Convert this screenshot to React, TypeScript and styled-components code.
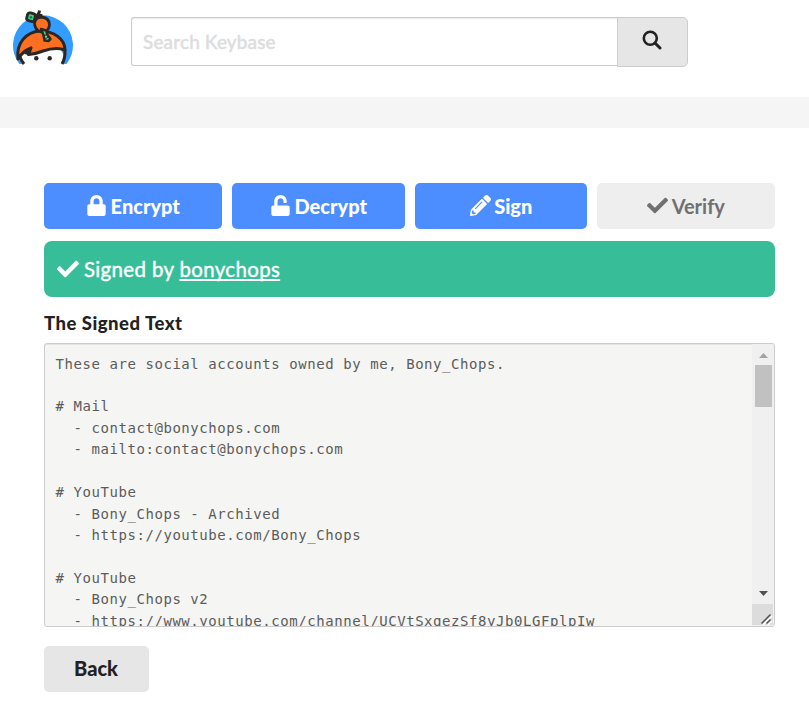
import React from "react";
import styled, { createGlobalStyle } from "styled-components";
import { FaCheck, FaLock, FaPencilAlt, FaUnlock } from "react-icons/fa";

const GlobalStyle = createGlobalStyle`
  * { box-sizing: border-box; }
  body {
    margin: 0;
    background: #fff;
    color: #222;
    font-family: Lato, "Open Sans", sans-serif;
  }
`;

const Header = styled.header`
  display: flex;
  height: 97px;
  padding: 9px 0 0 12px;
`;

const Logo = styled.svg`
  flex: none;
  width: 62px;
  height: 57px;
`;

const SearchForm = styled.form`
  display: flex;
  width: 557px;
  height: 50px;
  margin: 8px 0 0 57px;
`;

const SearchInput = styled.input`
  flex: 1;
  min-width: 0;
  height: 49px;
  padding: 0 11px 1px;
  border: 1px solid #ccc;
  border-right: 0;
  border-radius: 3px 0 0 3px;
  outline: 0;
  box-shadow: inset 0 1px 1px rgba(0, 0, 0, 0.075);
  font: 500 19px Lato, sans-serif;
  letter-spacing: 0.12px;
  &::placeholder { color: #ddd; opacity: 1; -webkit-text-stroke: 0.4px #ddd; }
`;

const SearchButton = styled.button`
  display: flex;
  align-items: center;
  justify-content: center;
  width: 71px;
  height: 50px;
  padding: 0 1px 4px 0;
  border: 1px solid #ccc;
  border-radius: 0 5px 5px 0;
  background: #e6e6e6;
  svg { width: 20px; height: 20px; }
`;

const Band = styled.div`
  height: 31px;
  background: #f5f5f5;
`;

const Main = styled.main`
  width: 731px;
  margin: 55px 0 0 44px;
`;

const Tabs = styled.nav`
  display: grid;
  grid-template-columns: 178px 173px 172px 178px;
  gap: 10px;
`;

const Tab = styled.button<{ $current?: boolean }>`
  display: flex;
  align-items: center;
  justify-content: center;
  gap: 4px;
  height: 46px;
  padding: 0;
  border: 0;
  border-radius: 5px;
  background: ${(p) => (p.$current ? "#eee" : "#4c8eff")};
  color: ${(p) => (p.$current ? "#707070" : "#fff")};
  font: 900 20px Lato, sans-serif;
  font-weight: ${(p) => (p.$current ? 700 : 900)};
  svg { width: auto; height: 21px; margin-top: -2px; }
  span { margin-left: -0.5px; }
`;

const Notice = styled.div`
  display: flex;
  align-items: center;
  gap: 5px;
  height: 56px;
  margin-top: 12px;
  padding: 0 13px;
  border-radius: 8px;
  background: #38bd99;
  color: #fff;
  font-size: 20.5px;
  letter-spacing: 0.33px;
  -webkit-text-stroke: 0.4px #fff;
  svg { width: 22px; height: 22px; }
  span { padding-bottom: 1px; }
  a { color: inherit; text-decoration: underline; text-decoration-thickness: 2px; text-underline-offset: 2px; text-decoration-skip-ink: none; }
`;

const Title = styled.h4`
  height: 20px;
  margin: 16px 0 10px;
  font-size: 18.5px;
  font-weight: 900;
  line-height: 20px;
  letter-spacing: 0.5px;
`;

const TextBox = styled.div`
  display: flex;
  height: 284px;
  border: 1px solid #ccc;
  border-radius: 3px;
  background: #f5f5f3;
  box-shadow: inset 0 1px 1px rgba(0, 0, 0, 0.075);
  overflow: hidden;
`;

const SignedText = styled.pre`
  flex: 1;
  min-width: 0;
  margin: 0;
  padding: 9.5px 0 0 10.5px;
  overflow: hidden;
  color: #5c5c5c;
  font: 14px/21.43px "DejaVu Sans Mono", monospace;
  letter-spacing: 0.562px;
`;

const Scrollbar = styled.div`
  display: flex;
  flex-direction: column;
  width: 22px;
  background: #f0f0f0;
`;

const Arrow = styled.svg`
  flex: none;
  width: 22px;
  height: 21px;
`;

const Track = styled.div`
  flex: 1;
  padding: 0 2px 0 3px;
`;

const Thumb = styled.div`
  height: 42px;
  background: #c1c1c1;
`;

const Grip = styled.svg`
  display: block;
  width: 21px;
  height: 21px;
  margin-bottom: 1px;
  background: #dcdcdc;
`;

const BackButton = styled.button`
  width: 105px;
  height: 46px;
  margin-top: 19px;
  padding: 0 1px 2px 0;
  border: 0;
  border-radius: 5px;
  background: #e6e6e6;
  color: #222;
  font: 900 20px Lato, sans-serif;
`;

const signedText = `These are social accounts owned by me, Bony_Chops.

# Mail
  - contact@bonychops.com
  - mailto:contact@bonychops.com

# YouTube
  - Bony_Chops - Archived
  - https://youtube.com/Bony_Chops

# YouTube
  - Bony_Chops v2
  - https://www.youtube.com/channel/UCVtSxqezSf8yJb0LGFplpIw`;

function KeybaseLogo() {
  return (
    <Logo viewBox="12 9 62 57" aria-label="Keybase">
      <path d="M19.5 64A30 30 0 1 1 66.5 64Z" fill="#339dff" />
      <path d="M22 64C19 53 25 45 43 45C60 45 66 52 63 64Z" fill="#fff" />
      <path d="M18 59C16 43 26 32 40 31C54 31 65 39 65 50C57 47 49 49 43 51C37 53.5 33 54 28.5 54.5L31 48C26 50 21 54 18 59Z" fill="#ff6f21" stroke="#2b2723" strokeWidth="3" strokeLinejoin="round" />
      <path d="M20 57Q21.5 61 24 64M65 50Q65.5 58 62 64" fill="none" stroke="#2b2723" strokeWidth="3" />
      <path d="M24 54L32 46L29 55Z" fill="#2b2723" />
      <path d="M34.5 23.5Q35 17 42 17Q49 18 49.500 24.500Q49 32 42 32Q35 31 34.500 23.500Z" fill="#ff6f21" stroke="#2b2723" strokeWidth="2.8" />
      <path d="M34 15.5Q39 16 39.5 10.5M36 17Q41 18 41 14" fill="none" stroke="#2b2723" strokeWidth="3" />
      <rect x="27" y="13.2" width="8" height="8" rx="2.5" fill="#3fce88" stroke="#2b2723" strokeWidth="2.8" transform="rotate(15 31 17.2)" />
      <circle cx="31" cy="17.2" r="1.3" fill="#1d7048" />
      <path d="M41 29L46 30.5L47.5 35L50.5 39L48.5 41L44.5 40.5L43.5 35Z" fill="#4be394" stroke="#2b2723" strokeWidth="2.5" strokeLinejoin="round" />
      <path d="M43.5 36L46.5 34.5M45 39L48.5 37" stroke="#2b2723" strokeWidth="1" />
      <circle cx="36.3" cy="58.3" r="2.2" fill="#2b2723" />
      <circle cx="49.7" cy="58.3" r="2.2" fill="#2b2723" />
    </Logo>
  );
}

export default function App() {
  return (
    <>
      <GlobalStyle />
      <Header>
        <KeybaseLogo />
        <SearchForm>
          <SearchInput placeholder="Search Keybase" />
          <SearchButton type="button" aria-label="Search">
            <svg viewBox="0 0 20 20" fill="none" stroke="#222">
              <circle cx="8.3" cy="8.3" r="6.5" strokeWidth="2.6" />
              <path d="M13 13L18 18" strokeWidth="3" strokeLinecap="round" />
            </svg>
          </SearchButton>
        </SearchForm>
      </Header>
      <Band />
      <Main>
        <Tabs>
          <Tab><FaLock /><span>Encrypt</span></Tab>
          <Tab><FaUnlock /><span>Decrypt</span></Tab>
          <Tab><FaPencilAlt /><span>Sign</span></Tab>
          <Tab $current><FaCheck /><span>Verify</span></Tab>
        </Tabs>
        <Notice>
          <FaCheck />
          <span>Signed by <a>bonychops</a></span>
        </Notice>
        <Title>The Signed Text</Title>
        <TextBox>
          <SignedText>{signedText}</SignedText>
          <Scrollbar>
            <Arrow viewBox="0 0 22 21"><path d="M7 14H16L11.5 9Z" fill="#a3a3a3" /></Arrow>
            <Track><Thumb /></Track>
            <Arrow viewBox="0 0 22 21"><path d="M7 8H16L11.5 13Z" fill="#505050" /></Arrow>
            <Grip viewBox="0 0 21 21">
              <path d="M10 20L19 11M15 20L19 16" stroke="#fff" strokeWidth="1.5" transform="translate(1 1)" />
              <path d="M9.5 19.5L18.5 10.5M14.5 19.5L18.5 15.5" stroke="#505050" strokeWidth="1.5" />
            </Grip>
          </Scrollbar>
        </TextBox>
        <BackButton>Back</BackButton>
      </Main>
    </>
  );
}
